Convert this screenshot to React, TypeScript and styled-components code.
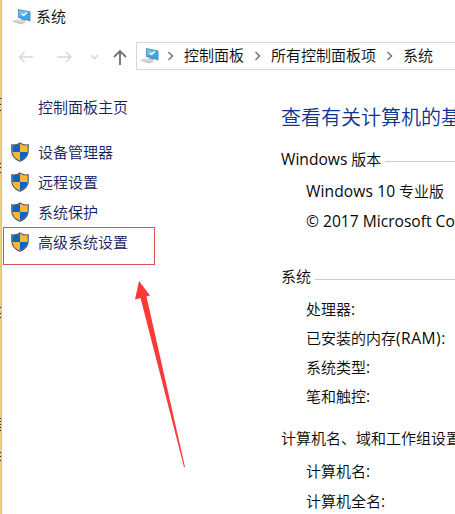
import React from "react";
import styled, { createGlobalStyle } from "styled-components";

const GlobalStyle = createGlobalStyle`
  html, body { margin: 0; padding: 0; overflow: hidden; background: #fff; }
  * { box-sizing: border-box; }
`;

const Window = styled.div`
  position: relative;
  display: flex;
  width: 455px;
  height: 514px;
  overflow: hidden;
  background: #fff;
  color: #080808;
  font-family: "Open Sans", "Noto Sans CJK SC", sans-serif;
  font-size: 15px;
  font-weight: 350;
  white-space: nowrap;
`;

const EdgeDrawing = styled.svg`
  flex: none;
  display: block;
`;

const Body = styled.div`
  flex: 1;
  min-width: 0;
  display: flex;
  flex-direction: column;
`;

const TitleBar = styled.header`
  flex: none;
  height: 34px;
  display: flex;
  align-items: center;
  gap: 4px;
  padding-left: 10px;
`;

const Label = styled.span<{ $raise?: boolean }>`
  font-family: "Noto Sans CJK SC", sans-serif;
  line-height: 20px;
  padding-bottom: ${(p) => (p.$raise ? 2 : 0)}px;
`;

const NavBar = styled.nav`
  flex: none;
  height: 44px;
  display: flex;
  align-items: center;
`;

const NavButtons = styled.svg`
  display: block;
  width: 134px;
  height: 28px;
  flex: none;
`;

const AddressBar = styled.div`
  flex: 1;
  height: 28px;
  display: flex;
  align-items: center;
  padding-left: 3px;
  border: 1px solid #d6d6d6;
  border-right: 0;
`;

const Separator = styled.svg<{ $lead?: number }>`
  flex: none;
  width: 27px;
  height: 12px;
  margin-left: ${(p) => p.$lead ?? 0}px;
`;

const Content = styled.div`
  display: flex;
  flex: 1;
  min-height: 0;
`;

const Sidebar = styled.aside`
  width: 279px;
  flex: none;
  padding-top: 14px;
  color: #16205e;
`;

const HomeLink = styled.div`
  height: 30px;
  line-height: 30px;
  padding-left: 36px;
  margin-bottom: 15px;
  font-family: "Noto Sans CJK SC", sans-serif;
`;

const TaskLink = styled.div`
  height: 30px;
  display: flex;
  align-items: center;
  padding-left: 8px;
  gap: 8px;
`;

const Main = styled.main`
  flex: 1;
  min-width: 0;
`;

const Heading = styled.h1`
  margin: 22px 0 25px;
  height: 34px;
  line-height: 34px;
  font-family: "Noto Sans CJK SC", sans-serif;
  font-size: 20px;
  font-weight: 350;
  color: #0c3592;
`;

const Section = styled.section<{ $gap: number }>`
  margin-bottom: ${(p) => p.$gap}px;
`;

const Legend = styled.div<{ $space: number }>`
  display: flex;
  align-items: center;
  gap: 4px;
  height: 0;
  margin-bottom: ${(p) => p.$space}px;
`;

const Rule = styled.div<{ $drop: number }>`
  flex: 1;
  height: 1px;
  margin-top: ${(p) => p.$drop}px;
  background: #cbcbcb;
`;

const Row = styled.div<{ $h: number }>`
  height: ${(p) => p.$h}px;
  line-height: ${(p) => p.$h}px;
  padding-left: 25px;
`;

const Latin = styled.span<{ $spacing?: number }>`
  font-size: 15.6px;
  font-weight: 400;
  letter-spacing: ${(p) => p.$spacing ?? 0}px;
`;

const Highlight = styled.div`
  position: absolute;
  left: 3px;
  top: 227px;
  width: 152px;
  height: 38px;
  border: 1px solid #d9505a;
`;

const Pointer = styled.svg`
  position: absolute;
  left: 130px;
  top: 275px;
`;

const marks = [98, 104, 110, 163, 167, 172, 307, 313, 317, 418, 421, 424, 427, 430, 452, 456, 460];

const Edge = () => (
  <EdgeDrawing width="2" height="514">
    <rect width="2" height="514" fill="#e9d478" />
    <rect x="1" width="1" height="514" fill="#d8c36a" />
    {marks.map((y) => <rect key={y} y={y} width="1" height="1" fill="#3a3010" />)}
  </EdgeDrawing>
);

const ComputerIcon = () => (
  <svg width="20" height="18" viewBox="0 0 20 18">
    <path d="M0 13 5.5 11.3 14 13.8 9 16.5Z" fill="#d3d7da" />
    <path d="M1 13.3 9 15.8 13 14" stroke="#b3b8bd" strokeWidth=".7" fill="none" />
    <path d="M8 10.4h4l2 2.8-4.4-.9Z" fill="#9faab4" />
    <path d="M6 1 18.5 3.5v10L6 9.7Z" fill="#5b8db0" />
    <path d="M6.8 2 17.6 4.2v8L6.8 9Z" fill="#3ba7e9" />
    <path d="M6.8 2 17.6 4.2 7 8.8Z" fill="#66bff2" />
    <path d="m9.8 5.7 1.9 1.9 3-3" stroke="#fff" strokeWidth="1.4" fill="none" />
  </svg>
);

const ShieldIcon = () => (
  <svg width="20" height="20" viewBox="0 0 20 20">
    <defs>
      <clipPath id="shield"><path d="M10 1.3C12 3 14.8 3.5 17.7 3.2V9c0 4.5-2.8 7.8-7.7 9.8C5.1 16.8 2.3 13.5 2.3 9V3.2C5.2 3.5 8 3 10 1.3Z" /></clipPath>
    </defs>
    <g clipPath="url(#shield)">
      <path fill="#0b64c8" d="M0 0h10v10H0zM10 10h10v10H10z" />
      <path fill="#fdb735" d="M10 0h10v10H10zM0 10h10v10H0z" />
    </g>
    <path d="M10 .9C12 2.6 14.9 3.2 18.2 2.9V9c0 4.8-3 8.2-8.2 10.3C4.8 17.2 1.8 13.8 1.8 9V2.9C5.1 3.2 8 2.6 10 .9Z" fill="none" stroke="#4c535b" strokeWidth="1.2" />
  </svg>
);

const Chevron = ({ lead }: { lead?: number }) => (
  <Separator $lead={lead} viewBox="0 0 27 12">
    <path d="m11.5 2 4 4-4 4" fill="none" stroke="#777" strokeWidth="1.5" />
  </Separator>
);

const tasks = ["设备管理器", "远程设置", "系统保护", "高级系统设置"];

export default function App() {
  return (
    <>
      <GlobalStyle />
      <Window>
        <Edge />
        <Body>
          <TitleBar><ComputerIcon /><Label $raise>系统</Label></TitleBar>
          <NavBar>
            <NavButtons viewBox="0 0 134 28" fill="none">
              <g stroke="#d6d6d6" strokeWidth="1.4">
                <path d="M31 15H17.5M22.5 10 17.5 15l5 5M55 15h14M64 10l5 5-5 5" />
                <path d="m89 13 3.5 3.5L96 13" strokeWidth="1.7" />
              </g>
              <path d="M118 23V9M112 15l6-6 6 6" stroke="#757575" strokeWidth="1.9" />
            </NavButtons>
            <AddressBar>
              <ComputerIcon /><Chevron lead={-3} />
              <Label $raise>控制面板</Label><Chevron />
              <Label $raise>所有控制面板项</Label><Chevron />
              <Label $raise>系统</Label>
            </AddressBar>
          </NavBar>
          <Content>
            <Sidebar>
              <HomeLink>控制面板主页</HomeLink>
              {tasks.map((t) => <TaskLink key={t}><ShieldIcon /><Label>{t}</Label></TaskLink>)}
            </Sidebar>
            <Main>
              <Heading>查看有关计算机的基</Heading>
              <Section $gap={41}>
                <Legend $space={17}><span><Latin>Windows</Latin> 版本</span><Rule $drop={5} /></Legend>
                <Row $h={30}><Latin $spacing={0.1}>Windows 10</Latin> 专业版</Row>
                <Row $h={30}><Latin>© 2017 Microsoft Co</Latin></Row>
              </Section>
              <Section $gap={27}>
                <Legend $space={18}><Label $raise>系统</Label><Rule $drop={5} /></Legend>
                <Row $h={29}>处理器<Latin>:</Latin></Row>
                <Row $h={29}>已安装的内存<Latin $spacing={0.5}>(RAM):</Latin></Row>
                <Row $h={29}>系统类型<Latin>:</Latin></Row>
                <Row $h={29}>笔和触控<Latin>:</Latin></Row>
              </Section>
              <Section $gap={0}>
                <Legend $space={18}><Label>计算机名、域和工作组设置</Label></Legend>
                <Row $h={30}>计算机名<Latin>:</Latin></Row>
                <Row $h={30}>计算机全名<Latin>:</Latin></Row>
              </Section>
            </Main>
          </Content>
        </Body>
        <Highlight />
        <Pointer width="60" height="195" viewBox="0 0 60 195">
          <path d="M9 6 20 20.5 16.5 21.5 55 192 54 192 10.5 23 5 24.5Z" fill="#f93a36" />
        </Pointer>
      </Window>
    </>
  );
}
